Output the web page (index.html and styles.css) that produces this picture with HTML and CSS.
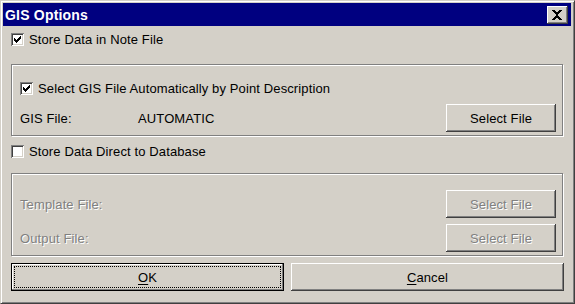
FILE: index.html
```html
<!DOCTYPE html>
<html lang="en">
<head>
  <meta charset="UTF-8">
  <title>GIS Options</title>
  <link rel="stylesheet" href="styles.css">
</head>
<body>
  <div class="window">
    <div class="titlebar">
      <span class="title">GIS Options</span>
      <div class="close-btn">
        <svg width="10" height="10" viewBox="0 0 10 10" shape-rendering="crispEdges">
          <path d="M0 0h3v1h-3zM7 0h3v1h-3zM1 1h3v1h-3zM6 1h3v1h-3zM2 2h6v1h-6zM3 3h4v1h-4zM4 4h2v2h-2zM3 6h4v1h-4zM2 7h6v1h-6zM1 8h3v1h-3zM6 8h3v1h-3zM0 9h3v1h-3zM7 9h3v1h-3z" fill="#000"/>
        </svg>
      </div>
    </div>

    <div class="content">
      <div class="check-row first">
        <span class="checkbox checked">
          <svg width="7" height="7" viewBox="0 0 7 7" shape-rendering="crispEdges">
            <path d="M0 2h1v3h-1zM1 3h1v3h-1zM2 4h1v3h-1zM3 3h1v3h-1zM4 2h1v3h-1zM5 1h1v3h-1zM6 0h1v3h-1z" fill="#000"/>
          </svg>
        </span>
        <span>Store Data in Note File</span>
      </div>

      <div class="group group-note">
        <div class="check-row">
          <span class="checkbox checked">
            <svg width="7" height="7" viewBox="0 0 7 7" shape-rendering="crispEdges">
              <path d="M0 2h1v3h-1zM1 3h1v3h-1zM2 4h1v3h-1zM3 3h1v3h-1zM4 2h1v3h-1zM5 1h1v3h-1zM6 0h1v3h-1z" fill="#000"/>
            </svg>
          </span>
          <span>Select GIS File Automatically by Point Description</span>
        </div>
        <div class="file-row gis-row">
          <span class="label">GIS File:</span>
          <span class="value">AUTOMATIC</span>
          <div class="btn file-btn">Select File</div>
        </div>
      </div>

      <div class="check-row db-check">
        <span class="checkbox"></span>
        <span>Store Data Direct to Database</span>
      </div>

      <div class="group group-db">
        <div class="file-row">
          <span class="label disabled">Template File:</span>
          <div class="btn file-btn disabled">Select File</div>
        </div>
        <div class="file-row">
          <span class="label disabled">Output File:</span>
          <div class="btn file-btn disabled">Select File</div>
        </div>
      </div>

      <div class="actions">
        <div class="btn default-btn"><span class="focus"><u>O</u>K</span></div>
        <div class="btn"><u>C</u>ancel</div>
      </div>
    </div>
  </div>
</body>
</html>
```

FILE: styles.css
```css
body {
  margin: 0;
  background-color: #d4d0c8;
  font-family: "Liberation Sans", Arial, sans-serif;
  font-size: 13px;
  letter-spacing: 0.12px;
  color: #000;
}
.window {
  width: 575px;
  height: 304px;
  box-sizing: border-box;
  background-color: #d4d0c8;
  border: 1px solid;
  border-color: #d4d0c8 #404040 #404040 #d4d0c8;
  box-shadow: inset 1px 1px 0 #fff, inset -1px -1px 0 #808080;
  padding: 2px 3px 2px 2px;
}
.titlebar {
  height: 23px;
  background-color: #000080;
  display: flex;
  align-items: center;
  justify-content: space-between;
}
.title {
  color: #fff;
  font-weight: bold;
  font-size: 14px;
  letter-spacing: 0.2px;
  padding-left: 2px;
}
.close-btn {
  width: 21px;
  height: 18px;
  box-sizing: border-box;
  margin-right: 3px;
  background-color: #d4d0c8;
  box-shadow: inset -1px -1px 0 #404040, inset 1px 1px 0 #fff, inset -2px -2px 0 #808080;
  display: flex;
  align-items: center;
  justify-content: center;
  padding-right: 1px;
}
.content {
  padding: 0 7px 0 8px;
}
.check-row {
  display: flex;
  align-items: center;
  gap: 5px;
  height: 13px;
  line-height: 13px;
  white-space: nowrap;
}
.check-row.first {
  margin-top: 7px;
}
.checkbox {
  width: 13px;
  height: 13px;
  box-sizing: border-box;
  background-color: #fff;
  box-shadow: inset 1px 1px 0 #808080, inset -1px -1px 0 #fff, inset 2px 2px 0 #404040, inset -2px -2px 0 #d4d0c8;
  display: flex;
  align-items: center;
  justify-content: center;
  flex-shrink: 0;
}
.checkbox svg {
  display: block;
}
.group {
  width: 552px;
  box-sizing: border-box;
  border: 1px solid #808080;
  box-shadow: inset 1px 1px 0 #fff, 1px 1px 0 #fff;
  padding-left: 8px;
  padding-right: 6px;
}
.group-note {
  margin-top: 18px;
  height: 72px;
  padding-top: 17px;
}
.file-row {
  display: flex;
  align-items: center;
  height: 28px;
}
.gis-row {
  margin-top: 9px;
}
.label {
  width: 118px;
}
.value {
  flex: 1;
}
.disabled {
  color: #808080;
  text-shadow: 1px 1px 0 #fff;
}
.db-check {
  margin-top: 9px;
}
.group-db {
  margin-top: 15px;
  height: 83px;
  padding-top: 16px;
}
.group-db .file-row + .file-row {
  margin-top: 6px;
}
.btn {
  height: 28px;
  box-sizing: border-box;
  display: flex;
  align-items: center;
  justify-content: center;
  background-color: #d4d0c8;
  box-shadow: inset -1px -1px 0 #404040, inset 1px 1px 0 #fff, inset -2px -2px 0 #808080;
}
.file-btn {
  width: 110px;
  margin-left: auto;
}
.actions {
  display: flex;
  gap: 7px;
  margin-top: 7px;
}
.actions .btn {
  width: 273px;
}
.default-btn {
  border: 1px solid #000;
  box-shadow: inset -1px -1px 0 #808080, inset 1px 1px 0 #fff;
  padding: 3px;
}
.focus {
  flex: 1;
  align-self: stretch;
  display: flex;
  align-items: center;
  justify-content: center;
  outline: 1px dotted #000;
}
u {
  text-decoration: underline;
  text-underline-offset: 2px;
}
```
